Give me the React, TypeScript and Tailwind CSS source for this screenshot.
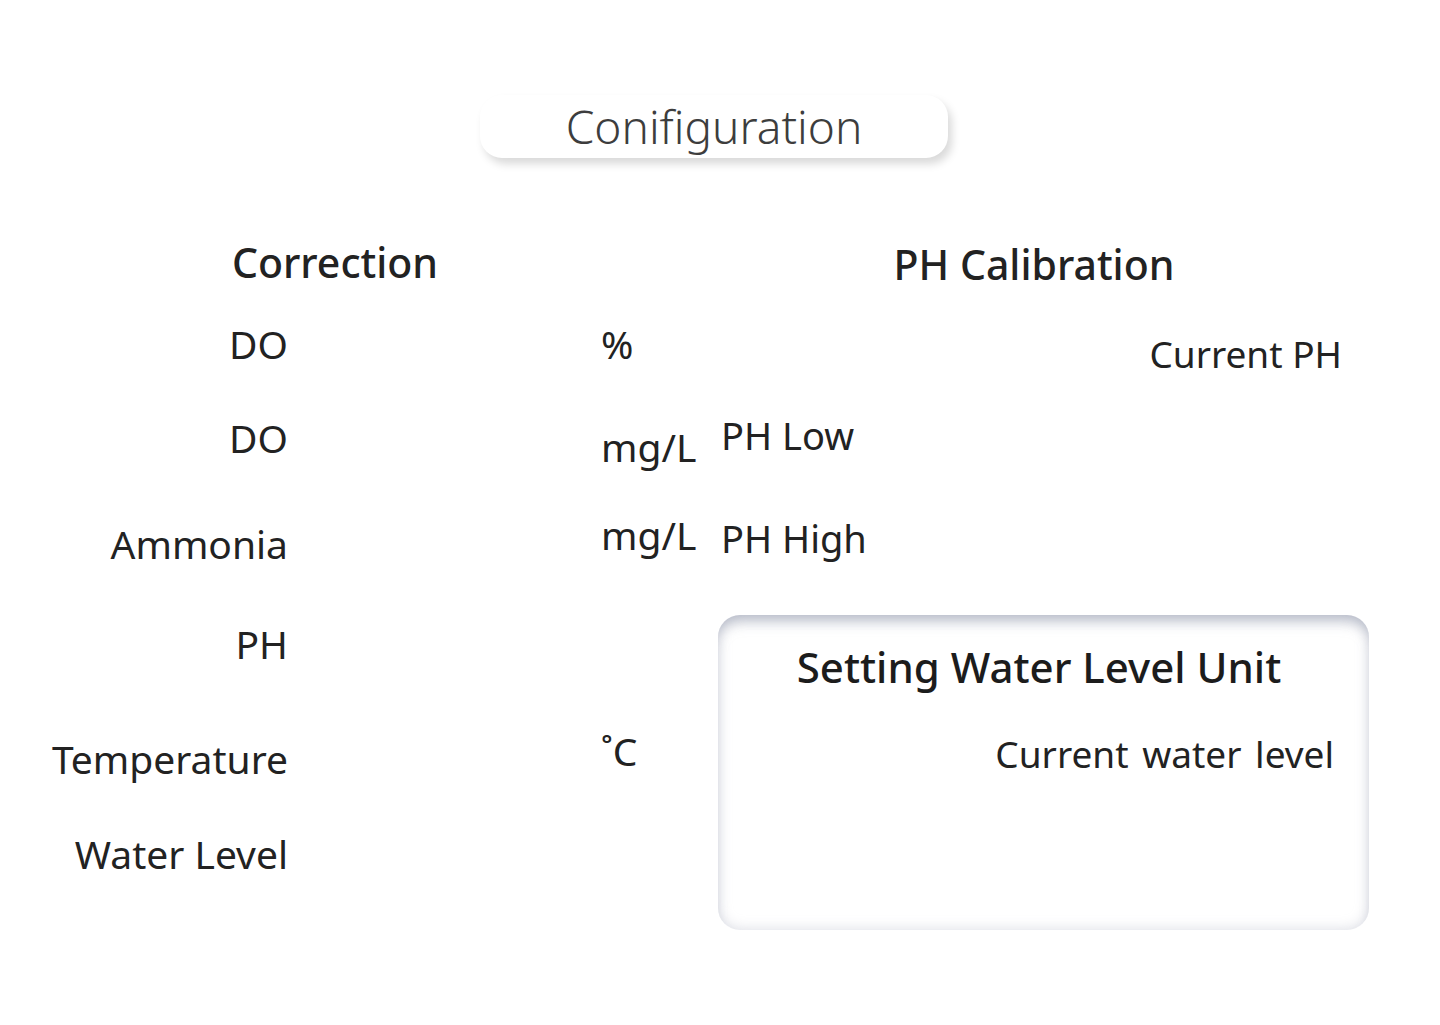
const font = { fontFamily: '"Noto Sans", Lato, sans-serif' }

const rows = [
  { label: 'DO', unit: '%', height: 'h-[94px]', unitShift: 'mt-0' },
  { label: 'DO', unit: 'mg/L', height: 'h-[106px]', unitShift: 'mt-[9px]' },
  { label: 'Ammonia', unit: 'mg/L', height: 'h-[100px]', unitShift: '-mt-[9px]' },
  { label: 'PH', unit: '', height: 'h-[115px]', unitShift: 'mt-0' },
  { label: 'Temperature', unit: '˚C', height: 'h-[95px]', unitShift: '-mt-[8px]' },
  { label: 'Water Level', unit: '', height: 'h-[40px]', unitShift: 'mt-0' },
]

export default function App() {
  return (
    <div className="min-h-screen w-[1440px] h-[1025px] bg-white text-[#222]" style={font}>
      {/* Title pill */}
      <div className="pt-[95px]">
        <div className="ml-[480px] w-[468px] h-[63px] rounded-[22px] bg-white shadow-[4px_6px_9px_rgba(0,0,0,0.15)] flex items-center justify-center pb-[2px]">
          <span className="text-[46px] font-light text-[#3d3d3d] leading-none">Conifiguration</span>
        </div>
      </div>

      <div className="flex">
        {/* Correction column */}
        <div className="w-[718px] shrink-0">
          <div className="mt-[79px] w-[670px] h-[50px] flex items-center justify-center">
            <span className="text-[41px] font-medium leading-none">Correction</span>
          </div>
          <div className="mt-[36px]">
            {rows.map((row, i) => (
              <div key={i} className={`flex items-start ${row.height}`}>
                <div className="w-[288px] h-[40px] flex items-center justify-end text-[39px] leading-none whitespace-nowrap">
                  {row.label}
                </div>
                <div className={`ml-[313px] h-[40px] flex items-center text-[39px] leading-none ${row.unitShift}`}>
                  {row.unit}
                </div>
              </div>
            ))}
          </div>
        </div>

        {/* PH Calibration column */}
        <div className="flex-1">
          <div className="mt-[81px] w-[632px] h-[50px] flex items-center justify-center">
            <span className="text-[41px] font-medium leading-none">PH Calibration</span>
          </div>
          <div className="mt-[44px] w-[624px] h-[40px] flex items-center justify-end text-[37px] leading-none">
            Current PH
          </div>
          <div className="mt-[42px] pl-[3px] h-[40px] flex items-center text-[38px] leading-none">PH Low</div>
          <div className="mt-[63px] pl-[3px] h-[40px] flex items-center text-[38px] leading-none">PH High</div>

          <div className="mt-[57px] w-[651px] h-[315px] rounded-[22px] bg-white shadow-[inset_0_12px_14px_-6px_rgba(150,156,175,0.6),inset_0_0_14px_rgba(160,165,185,0.4)]">
            <div className="pt-[32px] h-[72px] flex items-center justify-center pr-[9px]">
              <span className="text-[42px] font-medium leading-none text-[#1c1c1c]">Setting Water Level Unit</span>
            </div>
            <div className="mt-[46px] h-[40px] pr-[35px] flex items-center justify-end text-[37px] leading-none [word-spacing:4px]">
              Current water level
            </div>
          </div>
        </div>
      </div>
    </div>
  )
}
